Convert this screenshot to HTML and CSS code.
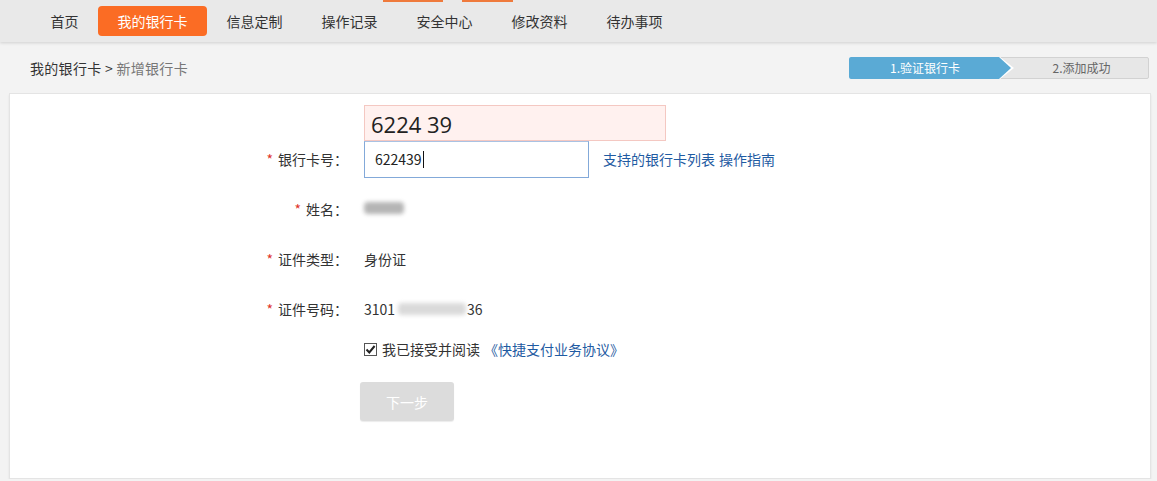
FILE: index.html
```html
<!DOCTYPE html>
<html lang="zh-CN">
<head>
  <meta charset="UTF-8">
  <meta name="viewport" content="width=device-width, initial-scale=1.0">
  <title>我的银行卡 - 新增银行卡</title>
  <link rel="stylesheet" href="styles.css">
</head>
<body>
  <nav class="top-nav">
    <span class="nav-mark mark-a"></span>
    <span class="nav-mark mark-b"></span>
    <a class="nav-item" href="#">首页</a>
    <a class="nav-item active" href="#">我的银行卡</a>
    <a class="nav-item" href="#">信息定制</a>
    <a class="nav-item" href="#">操作记录</a>
    <a class="nav-item" href="#">安全中心</a>
    <a class="nav-item" href="#">修改资料</a>
    <a class="nav-item" href="#">待办事项</a>
  </nav>

  <div class="page-head">
    <div class="breadcrumb">我的银行卡 &gt; <span class="current">新增银行卡</span></div>
    <div class="steps">
      <div class="step step-done"><span class="step-inner">1.验证银行卡</span></div>
      <div class="step step-next">2.添加成功</div>
    </div>
  </div>

  <main class="card">
    <form class="bind-form">
      <div class="form-row">
        <label class="form-label"><i>*</i>银行卡号：</label>
        <div class="form-value">
          <div class="card-field">
            <div class="card-tip">6224 39</div>
            <div class="card-input">622439<span class="caret"></span></div>
          </div>
          <a class="link" href="#">支持的银行卡列表</a>
          <a class="link" href="#">操作指南</a>
        </div>
      </div>

      <div class="form-row">
        <label class="form-label"><i>*</i>姓名：</label>
        <div class="form-value"><span class="masked name-mask"></span></div>
      </div>

      <div class="form-row">
        <label class="form-label"><i>*</i>证件类型：</label>
        <div class="form-value">身份证</div>
      </div>

      <div class="form-row">
        <label class="form-label"><i>*</i>证件号码：</label>
        <div class="form-value">3101<span class="masked id-mask"></span>36</div>
      </div>

      <div class="agree-row">
        <span class="check-box">
          <svg width="11" height="11" viewBox="0 0 11 11"><path d="M1.5 5.5 L4.3 8.5 L9.6 2" fill="none" stroke="#222" stroke-width="2"/></svg>
        </span>
        我已接受并阅读 <a class="link" href="#">《快捷支付业务协议》</a>
      </div>

      <div class="btn-row">
        <button type="button" class="btn-next" disabled>下一步</button>
      </div>
    </form>
  </main>
</body>
</html>
```

FILE: styles.css
```css
body {
  margin: 0;
  padding: 0;
  background: #f3f3f3;
  font-family: "Noto Sans CJK SC", "Liberation Sans", sans-serif;
  font-size: 14px;
  color: #333;
  overflow: hidden;
}

a {
  text-decoration: none;
}

.top-nav {
  position: relative;
  display: flex;
  align-items: center;
  height: 42px;
  padding-left: 31px;
  background: #e9e9e9;
  box-shadow: 0 1px 3px rgba(0, 0, 0, 0.15);
}

.nav-mark {
  position: absolute;
  top: 0;
  height: 2px;
  background: #ef7a3c;
}

.mark-a {
  left: 383px;
  width: 60px;
}

.mark-b {
  left: 462px;
  width: 51px;
}

.nav-item {
  display: block;
  height: 30px;
  line-height: 30px;
  padding: 0 19.5px;
  color: #333;
  border-radius: 4px;
}

.nav-item.active {
  background: #fb6c24;
  color: #fff;
}

.page-head {
  display: flex;
  align-items: center;
  justify-content: space-between;
  height: 51px;
  padding: 0 8px 0 30px;
}

.breadcrumb {
  color: #333;
  padding-top: 1px;
  letter-spacing: 0.3px;
}

.breadcrumb .current {
  color: #777;
}

.steps {
  display: flex;
  width: 300px;
  height: 22px;
  font-size: 12px;
  line-height: 22px;
  margin-top: 1px;
}

.step-done {
  position: relative;
  z-index: 1;
  width: 165px;
  margin-right: -14px;
  background: #fff;
  clip-path: polygon(0 0, 151px 0, 165px 50%, 151px 100%, 0 100%);
}

.step-inner {
  display: block;
  width: 162px;
  height: 22px;
  padding-right: 10px;
  box-sizing: border-box;
  text-align: center;
  color: #fff;
  background: #5aaad5;
  border-radius: 2px 0 0 2px;
  clip-path: polygon(0 0, 150px 0, 162px 50%, 150px 100%, 0 100%);
}

.step-next {
  flex: 1;
  padding-left: 14px;
  text-align: center;
  color: #666;
  background: #e7e7e7;
  border: 1px solid #d2d2d2;
  border-radius: 0 2px 2px 0;
  line-height: 20px;
}

.card {
  margin: 0 6px 0 9px;
  height: 386px;
  background: #fff;
  border: 1px solid #e4e4e4;
  box-shadow: 0 2px 2px rgba(0, 0, 0, 0.08);
  box-sizing: border-box;
}

.bind-form {
  padding-top: 40px;
}

.form-row {
  display: flex;
  align-items: center;
  height: 50px;
}

.form-label {
  width: 354px;
  text-align: right;
  color: #333;
  padding-right: 16px;
  box-sizing: border-box;
}

.form-label i {
  font-style: normal;
  color: #e0352b;
  margin-right: 5px;
}

.form-value {
  display: flex;
  align-items: center;
  color: #333;
}

.card-field {
  position: relative;
  margin-right: 14px;
}

.card-tip {
  position: absolute;
  left: 0;
  bottom: 100%;
  width: 302px;
  height: 36px;
  box-sizing: border-box;
  padding-left: 6px;
  line-height: 36px;
  font-family: "Open Sans", "Liberation Sans", sans-serif;
  font-size: 22px;
  color: #222;
  background: #fff1ef;
  border: 1px solid #f4c8c2;
}

.card-input {
  display: flex;
  align-items: center;
  width: 225px;
  height: 37px;
  box-sizing: border-box;
  padding-left: 10px;
  border: 1px solid #83a9d9;
  border-top-color: #a9c2e3;
  color: #222;
}

.caret {
  display: inline-block;
  width: 1px;
  height: 17px;
  margin-left: 1px;
  background: #111;
}

.link {
  color: #1f5ba2;
  margin-right: 4px;
}

.masked {
  display: inline-block;
  height: 12px;
  background: #b5b5b5;
  border-radius: 4px;
  filter: blur(2px);
}

.name-mask {
  width: 40px;
  margin-top: -2px;
}

.id-mask {
  width: 68px;
  margin: 0 1px 0 3px;
  background: #dadada;
}

.agree-row {
  display: flex;
  align-items: center;
  height: 30px;
  padding-left: 354px;
  color: #333;
}

.agree-row .link {
  margin-left: 4px;
}

.check-box {
  display: inline-flex;
  align-items: center;
  justify-content: center;
  width: 11px;
  height: 11px;
  margin-right: 5px;
  border: 1px solid #555;
  background: #fff;
}

.btn-row {
  padding: 18px 0 0 350px;
}

.btn-next {
  width: 94px;
  height: 39px;
  border: none;
  border-radius: 3px;
  background: #dcdcdc;
  color: #fff;
  font-family: inherit;
  font-size: 14px;
  box-shadow: 0 1px 1px rgba(0, 0, 0, 0.08);
}
```
